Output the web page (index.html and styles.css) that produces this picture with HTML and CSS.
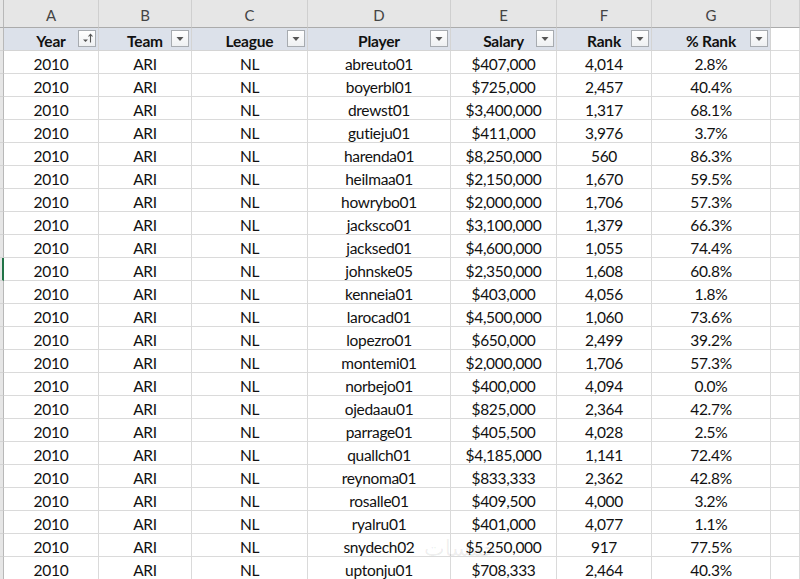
FILE: index.html
```html
<!DOCTYPE html>
<html>
<head>
<meta charset="utf-8">
<link rel="stylesheet" href="styles.css">
</head>
<body>
<div class="sheet">
  <div class="grid">
    <div class="rh corner"></div>
    <div class="colh">A</div><div class="colh">B</div><div class="colh">C</div><div class="colh">D</div><div class="colh">E</div><div class="colh">F</div><div class="colh">G</div><div class="colh"></div>

    <div class="rh"></div>
    <div class="th">Year<span class="fbtn sort"><svg width="18" height="17" viewBox="0 0 18 17"><path d="M5 9.5h5l-2.5 2.5z" fill="#555"/><path d="M12.5 12.5v-8M10.5 6.5l2-2.2 2 2.2" stroke="#555" stroke-width="1.1" fill="none"/></svg></span></div>
    <div class="th">Team<span class="fbtn"><svg width="18" height="17" viewBox="0 0 18 17"><path d="M5.5 7h7l-3.5 4z" fill="#555"/></svg></span></div>
    <div class="th">League<span class="fbtn"><svg width="18" height="17" viewBox="0 0 18 17"><path d="M5.5 7h7l-3.5 4z" fill="#555"/></svg></span></div>
    <div class="th">Player<span class="fbtn"><svg width="18" height="17" viewBox="0 0 18 17"><path d="M5.5 7h7l-3.5 4z" fill="#555"/></svg></span></div>
    <div class="th">Salary<span class="fbtn"><svg width="18" height="17" viewBox="0 0 18 17"><path d="M5.5 7h7l-3.5 4z" fill="#555"/></svg></span></div>
    <div class="th">Rank<span class="fbtn"><svg width="18" height="17" viewBox="0 0 18 17"><path d="M5.5 7h7l-3.5 4z" fill="#555"/></svg></span></div>
    <div class="th">% Rank<span class="fbtn"><svg width="18" height="17" viewBox="0 0 18 17"><path d="M5.5 7h7l-3.5 4z" fill="#555"/></svg></span></div>
    <div class="td blank"></div>

    <div class="rh"></div><div class="td">2010</div><div class="td">ARI</div><div class="td">NL</div><div class="td">abreuto01</div><div class="td">$407,000</div><div class="td">4,014</div><div class="td">2.8%</div><div class="td blank"></div>
    <div class="rh"></div><div class="td">2010</div><div class="td">ARI</div><div class="td">NL</div><div class="td">boyerbl01</div><div class="td">$725,000</div><div class="td">2,457</div><div class="td">40.4%</div><div class="td blank"></div>
    <div class="rh"></div><div class="td">2010</div><div class="td">ARI</div><div class="td">NL</div><div class="td">drewst01</div><div class="td">$3,400,000</div><div class="td">1,317</div><div class="td">68.1%</div><div class="td blank"></div>
    <div class="rh"></div><div class="td">2010</div><div class="td">ARI</div><div class="td">NL</div><div class="td">gutieju01</div><div class="td">$411,000</div><div class="td">3,976</div><div class="td">3.7%</div><div class="td blank"></div>
    <div class="rh"></div><div class="td">2010</div><div class="td">ARI</div><div class="td">NL</div><div class="td">harenda01</div><div class="td">$8,250,000</div><div class="td">560</div><div class="td">86.3%</div><div class="td blank"></div>
    <div class="rh"></div><div class="td">2010</div><div class="td">ARI</div><div class="td">NL</div><div class="td">heilmaa01</div><div class="td">$2,150,000</div><div class="td">1,670</div><div class="td">59.5%</div><div class="td blank"></div>
    <div class="rh"></div><div class="td">2010</div><div class="td">ARI</div><div class="td">NL</div><div class="td">howrybo01</div><div class="td">$2,000,000</div><div class="td">1,706</div><div class="td">57.3%</div><div class="td blank"></div>
    <div class="rh"></div><div class="td">2010</div><div class="td">ARI</div><div class="td">NL</div><div class="td">jacksco01</div><div class="td">$3,100,000</div><div class="td">1,379</div><div class="td">66.3%</div><div class="td blank"></div>
    <div class="rh"></div><div class="td">2010</div><div class="td">ARI</div><div class="td">NL</div><div class="td">jacksed01</div><div class="td">$4,600,000</div><div class="td">1,055</div><div class="td">74.4%</div><div class="td blank"></div>
    <div class="rh active"></div><div class="td">2010</div><div class="td">ARI</div><div class="td">NL</div><div class="td">johnske05</div><div class="td">$2,350,000</div><div class="td">1,608</div><div class="td">60.8%</div><div class="td blank"></div>
    <div class="rh"></div><div class="td">2010</div><div class="td">ARI</div><div class="td">NL</div><div class="td">kenneia01</div><div class="td">$403,000</div><div class="td">4,056</div><div class="td">1.8%</div><div class="td blank"></div>
    <div class="rh"></div><div class="td">2010</div><div class="td">ARI</div><div class="td">NL</div><div class="td">larocad01</div><div class="td">$4,500,000</div><div class="td">1,060</div><div class="td">73.6%</div><div class="td blank"></div>
    <div class="rh"></div><div class="td">2010</div><div class="td">ARI</div><div class="td">NL</div><div class="td">lopezro01</div><div class="td">$650,000</div><div class="td">2,499</div><div class="td">39.2%</div><div class="td blank"></div>
    <div class="rh"></div><div class="td">2010</div><div class="td">ARI</div><div class="td">NL</div><div class="td">montemi01</div><div class="td">$2,000,000</div><div class="td">1,706</div><div class="td">57.3%</div><div class="td blank"></div>
    <div class="rh"></div><div class="td">2010</div><div class="td">ARI</div><div class="td">NL</div><div class="td">norbejo01</div><div class="td">$400,000</div><div class="td">4,094</div><div class="td">0.0%</div><div class="td blank"></div>
    <div class="rh"></div><div class="td">2010</div><div class="td">ARI</div><div class="td">NL</div><div class="td">ojedaau01</div><div class="td">$825,000</div><div class="td">2,364</div><div class="td">42.7%</div><div class="td blank"></div>
    <div class="rh"></div><div class="td">2010</div><div class="td">ARI</div><div class="td">NL</div><div class="td">parrage01</div><div class="td">$405,500</div><div class="td">4,028</div><div class="td">2.5%</div><div class="td blank"></div>
    <div class="rh"></div><div class="td">2010</div><div class="td">ARI</div><div class="td">NL</div><div class="td">quallch01</div><div class="td">$4,185,000</div><div class="td">1,141</div><div class="td">72.4%</div><div class="td blank"></div>
    <div class="rh"></div><div class="td">2010</div><div class="td">ARI</div><div class="td">NL</div><div class="td">reynoma01</div><div class="td">$833,333</div><div class="td">2,362</div><div class="td">42.8%</div><div class="td blank"></div>
    <div class="rh"></div><div class="td">2010</div><div class="td">ARI</div><div class="td">NL</div><div class="td">rosalle01</div><div class="td">$409,500</div><div class="td">4,000</div><div class="td">3.2%</div><div class="td blank"></div>
    <div class="rh"></div><div class="td">2010</div><div class="td">ARI</div><div class="td">NL</div><div class="td">ryalru01</div><div class="td">$401,000</div><div class="td">4,077</div><div class="td">1.1%</div><div class="td blank"></div>
    <div class="rh"></div><div class="td">2010</div><div class="td">ARI</div><div class="td">NL</div><div class="td">snydech02</div><div class="td">$5,250,000</div><div class="td">917</div><div class="td">77.5%</div><div class="td blank"></div>
    <div class="rh"></div><div class="td">2010</div><div class="td">ARI</div><div class="td">NL</div><div class="td">uptonju01</div><div class="td">$708,333</div><div class="td">2,464</div><div class="td">40.3%</div><div class="td blank"></div>
  </div>
  <div class="watermark">خمسات</div>
</div>
</body>
</html>
```

FILE: styles.css
```css
html, body {
  margin: 0;
  padding: 0;
  background: #ffffff;
  overflow: hidden;
}
.sheet {
  position: relative;
  width: 800px;
  height: 579px;
  overflow: hidden;
  font-family: Lato, "Open Sans", sans-serif;
  font-size: 15.5px;
  color: #111111;
}
.grid {
  display: grid;
  grid-template-columns: 4px 95px 93px 116px 143px 106px 95px 119px 29px;
  grid-template-rows: 28px 23px repeat(23, 23px);
}
.rh {
  background: #e6e6e6;
  border-right: 1px solid #b8b8b8;
  border-bottom: 1px solid #d4d4d4;
  box-sizing: border-box;
}
.rh.corner {
  background: #e6e6e6;
  border-bottom: 1px solid #ababab;
}
.rh.active {
  background: #e6e6e6;
  border-right: 2px solid #217346;
  border-bottom: 1px solid #d4d4d4;
}
.colh {
  background: #e6e6e6;
  border-right: 1px solid #cfcfcf;
  border-bottom: 1px solid #ababab;
  box-sizing: border-box;
  display: flex;
  align-items: center;
  justify-content: center;
  padding-top: 2px;
  color: #444444;
  font-size: 15px;
}
.th {
  position: relative;
  background: #dce1ea;
  border-right: 1px solid #d4d4d4;
  border-bottom: 1px solid #d4d4d4;
  box-sizing: border-box;
  display: flex;
  align-items: center;
  justify-content: center;
  padding-top: 3px;
  font-weight: bold;
  color: #111111;
  letter-spacing: -0.2px;
}
.td {
  border-right: 1px solid #dadada;
  border-bottom: 1px solid #dadada;
  box-sizing: border-box;
  display: flex;
  align-items: center;
  justify-content: center;
  padding-top: 3px;
  letter-spacing: -0.3px;
}
.fbtn {
  position: absolute;
  right: 2px;
  top: 2px;
  width: 18px;
  height: 17px;
  box-sizing: border-box;
  border: 1px solid #a7abb0;
  background: linear-gradient(#ffffff, #eef0f2);
  display: flex;
}
.fbtn svg {
  display: block;
  margin: -1px;
}
.watermark {
  position: absolute;
  left: 424px;
  top: 536px;
  font-family: "DejaVu Sans", sans-serif;
  font-size: 22px;
  color: rgba(0, 0, 0, 0.07);
  pointer-events: none;
}
```
